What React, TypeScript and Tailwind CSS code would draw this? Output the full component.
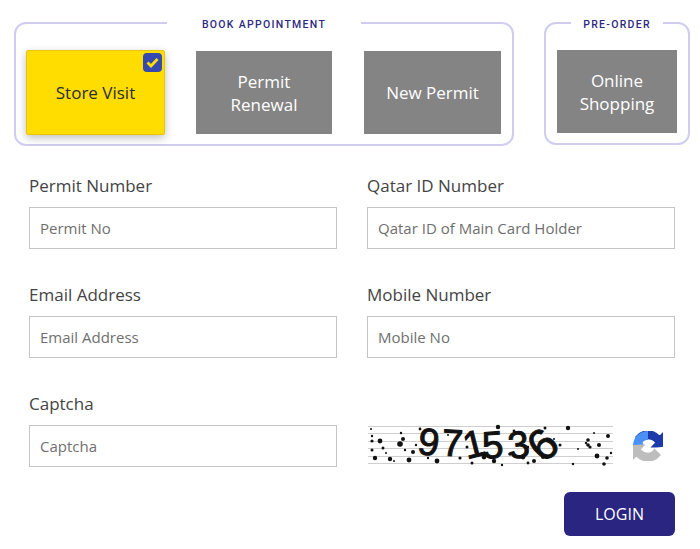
const fields = [
  { label: 'Permit Number', placeholder: 'Permit No' },
  { label: 'Qatar ID Number', placeholder: 'Qatar ID of Main Card Holder' },
  { label: 'Email Address', placeholder: 'Email Address' },
  { label: 'Mobile Number', placeholder: 'Mobile No' },
];

const specks: [number, number, number][] = [
  [12, 16, 2.4], [32, 19, 2.8], [35, 14, 2], [7, 33, 2.2], [22, 34, 2.2], [41, 35, 2.4], [15, 23, 1.5], [4, 25, 1.5],
  [45, 27, 2], [69, 36, 2.4], [116, 32, 2.4], [126, 36, 2.2], [130, 2, 2.2], [142, 29, 1.8], [155, 32, 2.4], [177, 3, 1.5],
  [200, 3, 2.2], [240, 11, 2], [220, 15, 1.8], [231, 20, 2], [229, 31, 2.4], [239, 33, 1.8], [192, 20, 1.5], [175, 32, 2],
  [236, 39, 1.8], [205, 39, 1.2], [104, 38, 1.5], [99, 22, 1.5], [220, 20, 1.8], [3, 4, 1], [33, 8, 1.2], [52, 4, 1.4],
  [48, 20, 1.2], [60, 33, 1.2], [80, 10, 1], [146, 6, 1.4], [160, 22, 1.2], [166, 36, 2], [186, 14, 1], [210, 24, 1],
  [226, 8, 1], [243, 28, 1.2], [26, 36, 1], [105, 12, 1.2], [92, 33, 1.6], [160, 38, 1.4], [134, 40, 1.2], [37, 25, 1.2],
  [4, 16, 1.6], [4, 11, 1.2], [18, 28, 1], [222, 22, 1.6], [218, 18, 1.2],
];

function CaptchaImage() {
  return (
    <svg width="246" height="41" viewBox="0 0 246 41" className="block overflow-visible">
      {[1, 8, 16, 23, 31, 38].map((y) => (
        <line key={y} x1="0" y1={y + 0.5} x2="245" y2={y + 0.5} stroke="#cfcfcf" strokeWidth="1" />
      ))}
      {specks.map(([x, y, r], i) => (
        <circle key={i} cx={x} cy={y} r={r} fill="#111" />
      ))}
      <g fontFamily="'Liberation Sans', sans-serif" fill="#111" stroke="#111" strokeWidth="1">
        <text x="50" y="30" fontSize="38" transform="rotate(8 60 18)">9</text>
        <text x="74" y="31" fontSize="38" transform="rotate(3 85 18)">7</text>
        <text x="95" y="32" fontSize="38" transform="rotate(-14 106 18)">1</text>
        <text x="114" y="33" fontSize="38" transform="rotate(-4 125 20)">5</text>
        <text x="140" y="33" fontSize="38" transform="rotate(-8 150 20)">3</text>
        <text x="163" y="34" fontSize="44" transform="rotate(-42 176 20)">6</text>
      </g>
    </svg>
  );
}

const arrowPath =
  'M64 32c0-.5 0-.9 0-1.4V4.5l-7.2 7.2C50.9 4.5 42 0 32 0 21.6 0 12.4 5 6.5 12.7l11.8 11.8c1.1-2.1 2.8-4 4.7-5.3 2.1-1.6 5-2.9 10-2.9.6 0 1 .1 1.4.2 6.2.5 11.5 3.9 14.7 8.8l-8.3 8.3c10.5 0 22.4-.1 23.2-1.6z';

function RecaptchaIcon() {
  return (
    <svg width="30" height="30" viewBox="0 0 64 64" className="block">
      <path d={arrowPath} fill="#1c3aa9" stroke="#1c3aa9" strokeWidth="3" />
      <path d="M32 0C14 0 0 14 0 32H24L20 24C23 20 27 19 32 19Z" fill="#4a90f5" />
      <path d={arrowPath} fill="#bdbdbd" stroke="#bdbdbd" strokeWidth="3" transform="rotate(180 32 32)" />
    </svg>
  );
}

function OptionCard({ title, wide }: { title: string; wide: string }) {
  return (
    <div className={`${wide} h-[83px] bg-[#848484] text-white text-[17px] leading-[23px] flex items-center justify-center text-center`}>
      {title}
    </div>
  );
}

export default function App() {
  return (
    <div className="w-[700px] h-[549px] bg-white overflow-hidden text-[#444] font-['Open_Sans',sans-serif]">
      <div className="flex pt-[15px] pl-[14px]">
        <fieldset className="w-[500px] h-[131px] border-2 border-[#d0cdf0] rounded-[12px] pt-[19px]">
          <legend className="mx-auto px-[35px] h-[16px] leading-[20px] text-[10.5px] font-medium tracking-[1.3px] text-[#2d2a80] font-['Roboto',sans-serif]">
            BOOK APPOINTMENT
          </legend>
          <div className="flex items-center pl-[10px]">
            <div className="relative w-[139px] h-[85px] bg-[#ffdd00] border border-[#e8c40c] rounded-[2px] shadow-[0_3px_8px_rgba(0,0,0,0.25)] text-[#2b2b3a] text-[17px] flex items-center justify-center">
              Store Visit
              <div className="absolute top-[2px] right-[2px] w-[19px] h-[19px] rounded-[4px] bg-[#3549b1] flex items-center justify-center">
                <svg width="13" height="11" viewBox="0 0 13 11">
                  <path d="M1.5 5.5 L5 9 L11.5 2" fill="none" stroke="#ffdd00" strokeWidth="2.8" />
                </svg>
              </div>
            </div>
            <div className="ml-[31px]">
              <OptionCard title="Permit Renewal" wide="w-[136px] px-6" />
            </div>
            <div className="ml-[32px]">
              <OptionCard title="New Permit" wide="w-[137px]" />
            </div>
          </div>
        </fieldset>
        <fieldset className="ml-[30px] w-[146px] h-[130px] border-2 border-[#d0cdf0] rounded-[12px] pt-[19px]">
          <legend className="mx-auto px-[12px] h-[16px] leading-[20px] text-[10.5px] font-medium tracking-[1.3px] text-[#2d2a80] font-['Roboto',sans-serif]">
            PRE-ORDER
          </legend>
          <div className="pl-[11px]">
            <OptionCard title="Online Shopping" wide="w-[120px] px-4" />
          </div>
        </fieldset>
      </div>

      <div className="grid grid-cols-[308px_308px] gap-x-[30px] pl-[29px] mt-[28px]">
        {fields.map((f) => (
          <div key={f.label} className="h-[109px]">
            <div className="h-[23px] leading-[23px] text-[17px] mb-[10px]">{f.label}</div>
            <input
              placeholder={f.placeholder}
              className="w-full h-[42px] border border-[#c4c4c4] px-[10px] text-[15px] outline-none placeholder:text-[#6f6f6f]"
            />
          </div>
        ))}
        <div className="h-[91px]">
          <div className="h-[23px] leading-[23px] text-[17px] mb-[10px]">Captcha</div>
          <input
            placeholder="Captcha"
            className="w-full h-[42px] border border-[#c4c4c4] px-[10px] text-[15px] outline-none placeholder:text-[#6f6f6f]"
          />
        </div>
        <div className="flex items-start pt-[33px]">
          <div className="ml-px">
            <CaptchaImage />
          </div>
          <div className="ml-[19px] mt-[6px]">
            <RecaptchaIcon />
          </div>
        </div>
      </div>

      <div className="flex justify-end pr-[25px] mt-[9px]">
        <button className="w-[111px] h-[44px] rounded-[6px] bg-[#2b2582] text-white text-[16px]">LOGIN</button>
      </div>
    </div>
  );
}
